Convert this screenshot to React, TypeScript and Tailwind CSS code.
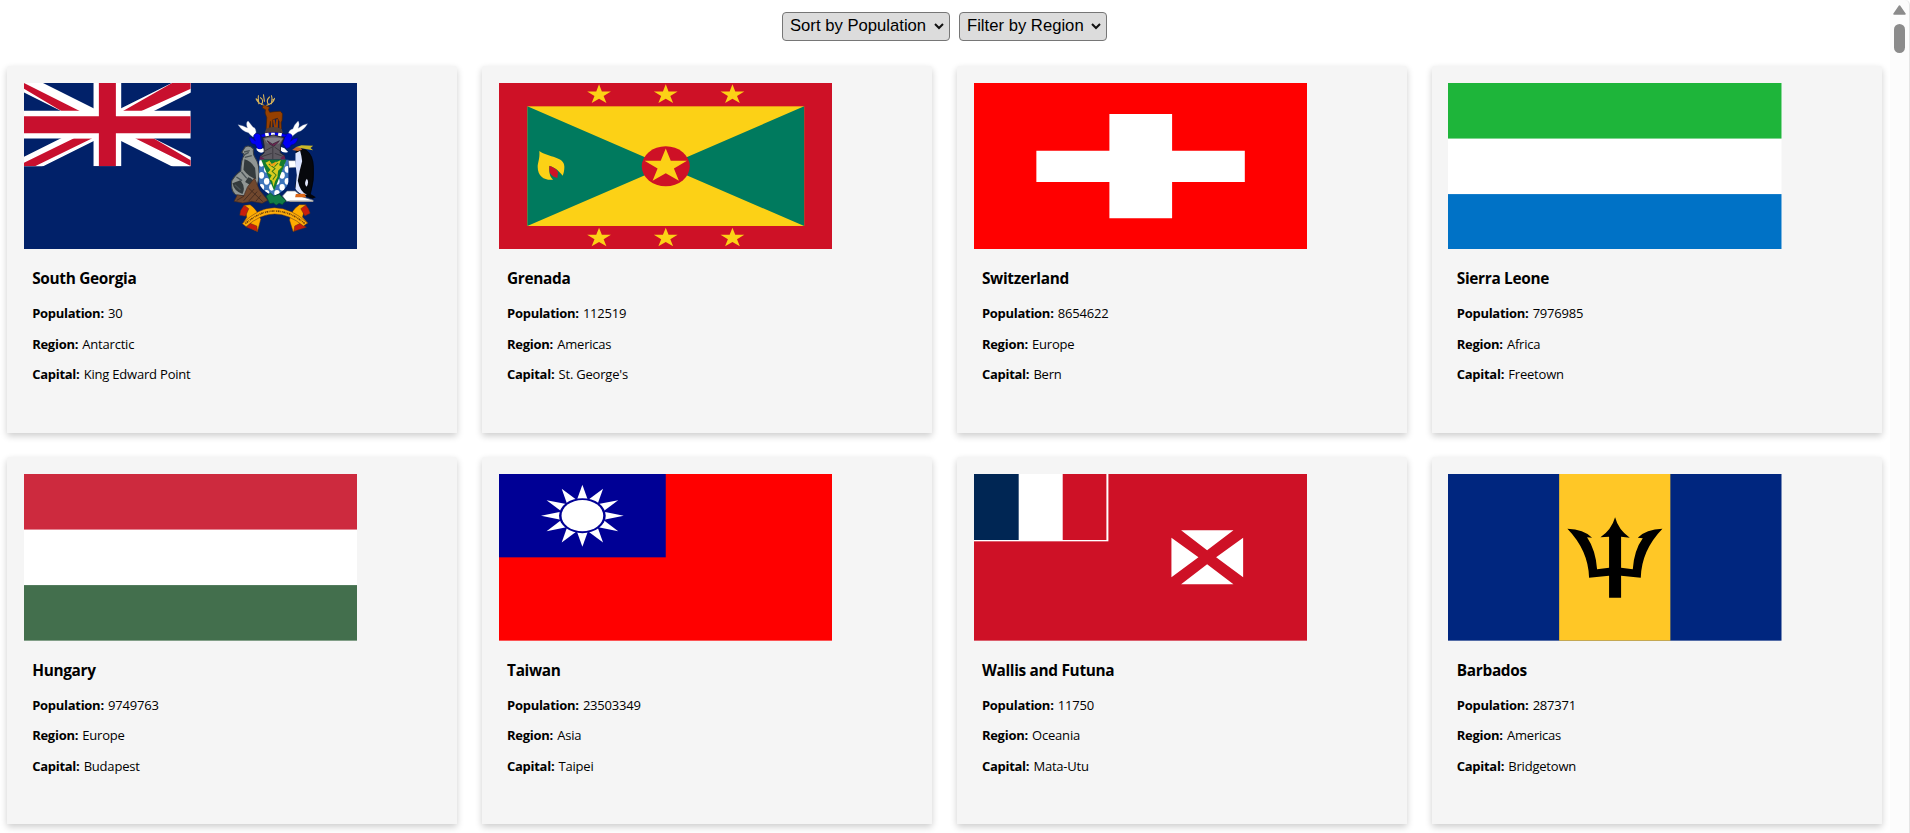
import React from "react";

const STAR = "0,-10 2.25,-3.1 9.5,-3.1 3.65,1.2 5.9,8.1 0,3.85 -5.9,8.1 -3.65,1.2 -9.5,-3.1 -2.25,-3.1";

function Flag({ children }: { children: React.ReactNode }) {
  return (
    <svg className="block h-[166.67px] w-[333.5px]" viewBox="0 0 1000 500" preserveAspectRatio="none">
      {children}
    </svg>
  );
}

function Arms() {
  const checks: React.ReactNode[] = [];
  for (let r = 0; r < 6; r++)
    for (let c = 0; c < 6; c++)
      if ((r + c) % 2 === 0)
        checks.push(
          <ellipse key={`${r}-${c}`} cx={154 + c * 15.5} cy={250 + r * 18} rx="8" ry="10" fill="#fff" />,
        );
  return (
    <g transform="translate(558 -9)" strokeLinejoin="round">
      <g fill="none" stroke="#d9b45a" strokeWidth="3.2" strokeLinecap="round">
        <path d="M163 77C154 72 141 70 138 56M146 71C146 62 143 54 145 47M154 73C160 65 158 57 151 53M168 77C178 73 191 69 193 55M184 71C184 61 188 55 184 47M175 73C169 65 172 57 178 51M138 57L143 60M193 57L188 60M163 64L160 44" />
      </g>
      <path d="M158 78L166 76L178 82L175 89L179 97L192 95L211 94L217 101L216 121L213 128L214 148L207 148L207 124L202 115L188 119L187 148L181 148L181 124L177 148L168 148L170 113L165 99L166 89L157 84Z" fill="#964000" stroke="#43210a" strokeWidth="2" />
      <path d="M191 119L196 148M201 118L200 148" stroke="#964000" strokeWidth="6" />
      <path d="M168 146Q190 136 215 147L218 159H164Z" fill="#50403c" />
      <g fill="#fff" stroke="#9aa3bb" strokeWidth="1">
        <path d="M84 134Q99 136 112 144Q106 127 114 123Q122 133 129 142Q137 143 138 157L129 171Q119 164 115 158Q96 154 84 134Z" />
        <path d="M292 131Q278 133 264 145Q270 131 264 123Q252 134 248 147Q237 149 235 160L244 171Q252 163 263 156Q281 151 292 131Z" />
      </g>
      <g fill="#0000f5" stroke="#000084" strokeWidth="1.5">
        <path d="M131 166Q139 155 151 165Q151 180 157 201L149 211Q139 204 135 193Q120 194 118 172Q126 172 136 183Q131 177 131 166Z" />
        <path d="M246 166Q238 155 224 165Q224 178 218 190L228 205Q239 206 243 195Q260 193 263 174Q251 173 241 184Q247 176 246 166Z" />
        <path d="M152 164Q190 151 229 164L226 171Q190 163 156 172Z" />
      </g>
      <path d="M164 160L175 158L177 168L167 170ZM183 158H194V168H183ZM205 158L216 160L213 170L203 168ZM139 204Q150 211 159 204L165 213Q151 224 140 211ZM211 200L223 205L234 216Q219 221 211 211Z" fill="#fff" />
      <path d="M158 173L190 165L222 173L212 194L210 218L223 227V239H150V229L162 219V196Z" fill="#5d5961" stroke="#232127" strokeWidth="2.5" />
      <path d="M163 176Q190 169 218 176L208 190Q190 200 171 189Z" fill="#85818a" />
      <path d="M171 182L187 192L208 182L202 190L190 199L177 191Z" fill="#6c2552" stroke="#1d1720" strokeWidth="1.5" />
      <path d="M188 199V237M164 213L186 201M210 213L193 201M154 230L185 220M221 230L194 220" stroke="#2d2a30" strokeWidth="2" fill="none" />
      <path d="M150 228L163 236L157 243L148 240ZM222 226L226 237L215 241L211 234Z" fill="#692050" />
      <path d="M105 201Q118 193 130 207Q128 223 135 233Q151 255 145 300L137 335Q118 352 81 346Q61 340 65 302Q79 280 92 273Q93 237 103 224L95 217Z" fill="#909694" stroke="#343b42" strokeWidth="3" />
      <path d="M103 238Q121 241 135 264L138 297Q115 290 100 269ZM67 310L91 301Q108 323 97 342Q72 334 67 310ZM114 292Q135 297 132 322L105 306Z" fill="#343b3d" />
      <path d="M102 216L119 212M99 226L116 217M104 232L125 227M94 276L110 295M79 291L96 302M74 314L91 330" fill="none" stroke="#4a5356" strokeWidth="4" />
      <path d="M112 321L133 294L148 330L173 361L156 370L125 364L98 369L72 364L82 344L101 348Z" fill="#71482e" stroke="#432b21" strokeWidth="2" />
      <path d="M80 361L101 349M101 362L132 327M116 363L141 335M137 364L152 346M115 324L158 365" stroke="#3e291e" strokeWidth="2.5" />
      <path d="M147 239H235V306Q230 332 191 348Q150 331 147 306Z" fill="#3d75bb" />
      <clipPath id="arms-shield"><path d="M147 239H235V306Q230 332 191 348Q150 331 147 306Z" /></clipPath>
      <g clipPath="url(#arms-shield)">{checks}</g>
      <path d="M153 239H229L192 332Z" fill="#147c2e" />
      <path d="M166 248L178 242L185 252L200 246L212 240L207 256L216 260L204 272L202 291L195 304L190 320L186 302L178 298L185 286L173 278L181 269L174 260Z" fill="#d7cb20" />
      <path d="M176 252L195 266L186 274L198 285L188 299M204 249L193 260" fill="none" stroke="#367619" strokeWidth="3" />
      <path d="M176 239L184 253L199 244L194 256L182 259Z" fill="#ef9c16" />
      <path d="M235 242L256 242L259 262L237 263Z" fill="#fff" stroke="#737885" strokeWidth="1.5" />
      <path d="M231 333L255 333L276 350L309 361L309 364H229L217 348Z" fill="#fff" stroke="#6c717c" strokeWidth="2" />
      <path d="M238 364H309" stroke="#999" strokeWidth="4" />
      <path d="M258 212Q272 202 289 211Q309 226 310 262Q313 301 301 341L293 348Q264 347 256 321L262 280Z" fill="#07080c" stroke="#000" strokeWidth="2" />
      <path d="M256 220L270 212Q275 230 276 244Q267 276 263 302Q270 337 291 344Q265 345 256 326L260 285Q254 251 256 220Z" fill="#dce4ff" />
      <path d="M290 296Q298 307 289 320Q280 310 290 296Z" fill="#e6eaff" />
      <path d="M246 210L258 201L270 201L276 209L263 213Z" fill="#c6632c" />
      <path d="M258 201L274 196L309 197L301 204L309 211L291 208L275 205Z" fill="#cbb928" />
      <path d="M257 342L284 341L288 352H255Z" fill="#dc6617" />
      <path d="M286 345L300 341L317 352L307 356L290 351Z" fill="#03040a" />
      <path d="M168 348L181 339L191 348L208 343L228 363L221 368L217 374L207 370L198 376L190 369L179 371Z" fill="#137d46" stroke="#064528" strokeWidth="2" />
      <g stroke="#5a2e18" strokeWidth="1.5">
        <path d="M102 376L120 374Q143 390 152 418L142 455Q111 441 97 431L110 412Z" fill="#ffad00" />
        <path d="M288 374L268 374Q242 391 238 420L249 455L293 429L277 411Z" fill="#ffad00" />
        <path d="M102 375L116 386L106 409L89 406L91 392ZM287 375L272 386L284 408L300 400L295 386ZM120 430L109 442L142 454L140 438ZM270 430L289 442L251 454L254 438Z" fill="#c91e0b" />
        <path d="M97 431Q144 383 193 383Q244 384 292 429L280 438Q236 402 194 402Q150 402 108 440Z" fill="#ffae0a" />
      </g>
      <path d="M106 431Q149 393 193 393Q243 394 284 431" fill="none" stroke="#70420a" strokeWidth="5" strokeDasharray="3 2 5 2 2 3" />
    </g>
  );
}

const SouthGeorgia = () => (
  <Flag>
    <rect width="1000" height="500" fill="#012169" />
    <svg width="500" height="250" viewBox="0 0 500 250">
      <path d="M0 0L500 250M500 0L0 250" stroke="#fff" strokeWidth="51" />
      <g fill="#c8102e">
        <path d="M0 0V17L112 84H167L0 0ZM500 0H444L297 84H352L500 17ZM0 250H33L205 166H150L0 239ZM333 166L500 249V232L388 166Z" />
      </g>
      <path d="M250 0V250M0 125H500" stroke="#fff" strokeWidth="83" />
      <path d="M250 0V250M0 125H500" stroke="#c8102e" strokeWidth="51" />
    </svg>
    <Arms />
  </Flag>
);

const Grenada = () => (
  <Flag>
    <rect width="1000" height="500" fill="#ce1126" />
    <rect x="85" y="70" width="830" height="359" fill="#fcd116" />
    <path d="M85 70L500 250L85 429ZM915 70L500 250L915 429Z" fill="#007a5e" />
    <ellipse cx="500" cy="250" rx="72" ry="60" fill="#ce1126" />
    <g fill="#fcd116">
      <polygon points={STAR} transform="translate(500 250) scale(6.7 5.35)" />
      {[300, 500, 700].map((x) => (
        <React.Fragment key={x}>
          <polygon points={STAR} transform={`translate(${x} 35) scale(3.75 3.1)`} />
          <polygon points={STAR} transform={`translate(${x} 465) scale(3.75 3.1)`} />
        </React.Fragment>
      ))}
      <path d="M121 204C149 224 196 220 196 251C196 262 194 271 191 278C180 264 168 253 151 249C150 267 151 280 162 290C139 293 116 282 116 252C116 238 123 228 121 204Z" />
    </g>
    <path d="M151 248Q171 255 177 268L175 285Q151 278 151 260Z" fill="#ce1126" />
  </Flag>
);

const Switzerland = () => (
  <Flag>
    <rect width="1000" height="500" fill="#f00" />
    <path d="M406 93H594V203H812V297H594V406H406V297H187V203H406Z" fill="#fff" />
  </Flag>
);

const Stripes = ({ top, bottom }: { top: string; bottom: string }) => (
  <Flag>
    <rect width="1000" height="500" fill="#fff" />
    <rect width="1000" height="166.7" fill={top} />
    <rect y="333.3" width="1000" height="166.7" fill={bottom} />
  </Flag>
);

const Taiwan = () => (
  <Flag>
    <rect width="1000" height="500" fill="#f00" />
    <rect width="500" height="250" fill="#000095" />
    <g transform="translate(250 125) scale(1 .75)">
      {Array.from({ length: 12 }, (_, i) => (
        <path key={i} d="M0 -124L17 -61H-17Z" fill="#fff" transform={`rotate(${i * 30})`} />
      ))}
      <circle r="70" fill="#000095" />
      <circle r="62.5" fill="#fff" />
    </g>
  </Flag>
);

const Wallis = () => (
  <Flag>
    <rect width="1000" height="500" fill="#ce1126" />
    <rect width="403" height="202" fill="#fff" />
    <rect width="134" height="198" fill="#002654" />
    <rect x="266" width="131" height="198" fill="#ce1126" />
    <path d="M621 169H778L699 229ZM621 331H778L699 271ZM592 191V310L673 250ZM807 191V310L726 250Z" fill="#fff" />
  </Flag>
);

const Barbados = () => (
  <Flag>
    <rect width="1000" height="500" fill="#00267f" />
    <rect x="333.3" width="333.4" height="500" fill="#ffc726" />
    <path d="M501 130Q511 168 545 191L519 188V281L554 286Q558 229 584 193L569 191Q594 165 643 164Q580 229 578 311L519 305V371H483V305L423 311Q421 229 358 164Q407 165 432 191L417 190Q443 229 447 286L483 281V188L457 190Q490 168 501 130Z" fill="#000" />
  </Flag>
);

const countries = [
  { name: "South Georgia", population: "30", region: "Antarctic", capital: "King Edward Point", flag: <SouthGeorgia /> },
  { name: "Grenada", population: "112519", region: "Americas", capital: "St. George's", flag: <Grenada /> },
  { name: "Switzerland", population: "8654622", region: "Europe", capital: "Bern", flag: <Switzerland /> },
  { name: "Sierra Leone", population: "7976985", region: "Africa", capital: "Freetown", flag: <Stripes top="#1eb53a" bottom="#0072c6" /> },
  { name: "Hungary", population: "9749763", region: "Europe", capital: "Budapest", flag: <Stripes top="#cd2a3e" bottom="#436f4d" /> },
  { name: "Taiwan", population: "23503349", region: "Asia", capital: "Taipei", flag: <Taiwan /> },
  { name: "Wallis and Futuna", population: "11750", region: "Oceania", capital: "Mata-Utu", flag: <Wallis /> },
  { name: "Barbados", population: "287371", region: "Americas", capital: "Bridgetown", flag: <Barbados /> },
];

function Detail({ label, value }: { label: string; value: string }) {
  return (
    <p className="h-[30.5px] whitespace-nowrap text-[13px] leading-[18px] tracking-[-0.2px]">
      <b className="mr-px font-bold tracking-[-0.28px]">{label}:</b> {value}
    </p>
  );
}

function Picker({ label, width }: { label: string; width: string }) {
  return (
    <button
      className={`${width} flex h-[29px] items-center justify-between rounded-[4px] border border-[#767676] bg-[#dcdcdc] pr-[5px] pl-[7px] font-['Liberation_Sans',Arial,sans-serif] text-[16.67px] leading-none whitespace-nowrap text-black`}
    >
      {label}
      <svg className="h-[7px] w-[10px]" viewBox="0 0 10 7" fill="none" stroke="#111" strokeWidth="2">
        <path d="M1 1L5 5L9 1" />
      </svg>
    </button>
  );
}

export default function App() {
  return (
    <div className="flex h-[833px] w-[1910px] overflow-hidden bg-white font-['Open_Sans','Noto_Sans',sans-serif] text-black">
      <main className="w-[1890px] shrink-0">
        <div className="flex h-[65.93px] gap-[9px] pt-3 pl-[782px]">
          <Picker label="Sort by Population" width="w-[168px]" />
          <Picker label="Filter by Region" width="w-[148px]" />
        </div>
        <div className="grid grid-cols-[repeat(4,450px)] gap-x-[24.88px] gap-y-[24.65px] pl-[7.13px]">
          {countries.map((c) => (
            <article
              key={c.name}
              className="h-[366.9px] rounded-t-[2px] bg-[#f5f5f5] p-[16.67px] shadow-[0_3px_7px_rgba(0,0,0,0.2)]"
            >
              {c.flag}
              <div className="pt-[19.2px] pl-[8.4px]">
                <h3 className="h-[35.8px] text-[15.4px] leading-[22px] font-bold tracking-[-0.32px] whitespace-nowrap">{c.name}</h3>
                <Detail label="Population" value={c.population} />
                <Detail label="Region" value={c.region} />
                <Detail label="Capital" value={c.capital} />
              </div>
            </article>
          ))}
        </div>
      </main>
      <aside className="flex w-5 flex-col items-center rounded-tr-[5px] border-r border-[#e5e5e5] bg-[#fcfcfc] pt-[5px]">
        <svg className="h-[10px] w-[13px]" viewBox="0 0 13 10">
          <path d="M6.5 1L12 9H1Z" fill="#8b8b8b" stroke="#8b8b8b" strokeWidth="1.5" strokeLinejoin="round" />
        </svg>
        <div className="mt-[9px] h-[29px] w-[11px] rounded-full bg-[#8b8b8b]" />
      </aside>
    </div>
  );
}
